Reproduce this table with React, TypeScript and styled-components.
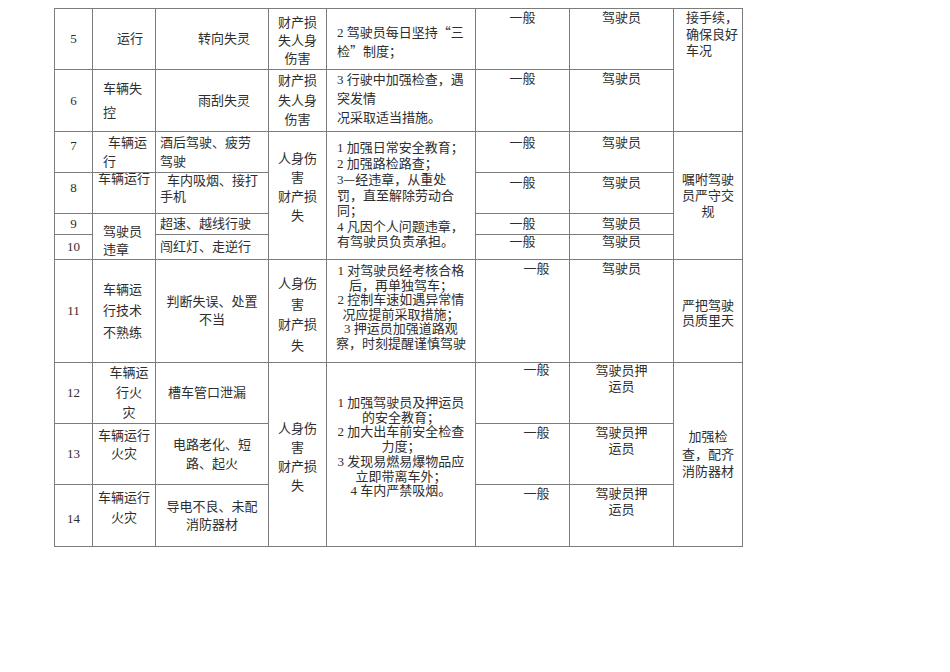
import React from 'react';
import styled, { createGlobalStyle } from 'styled-components';

const GlobalStyle = createGlobalStyle`
  html, body { margin: 0; padding: 0; background: #ffffff; }
  body { font-family: "Liberation Serif", "Noto Sans CJK SC", serif; }
`;

const Page = styled.div`
  padding: 8px 0 0 54px;
`;

const Sheet = styled.table`
  border-collapse: collapse;
  table-layout: fixed;
  width: 688px;
`;

const Col = styled.col<{ $w: number }>`
  width: ${(p) => p.$w}px;
`;

const Row = styled.tr<{ $h: number }>`
  height: ${(p) => p.$h}px;
`;

type CellProps = {
  $align?: 'left' | 'center';
  $v?: 'top' | 'middle' | 'bottom';
  $pt?: number;
  $pl?: number;
  $lh?: number;
  $indent?: number;
};

const Cell = styled.td<CellProps>`
  border: 1px solid #7c7c7c;
  padding: ${(p) => p.$pt ?? 0}px 2px 0 ${(p) => p.$pl ?? 2}px;
  text-align: ${(p) => p.$align ?? 'center'};
  vertical-align: ${(p) => p.$v ?? 'middle'};
  line-height: ${(p) => p.$lh ?? 16}px;
  text-indent: ${(p) => p.$indent ?? 0}px;
  font-size: 13px;
  color: #2e2e2e;
  white-space: nowrap;
  overflow: hidden;
`;

const Num = styled(Cell)`
  font-size: 13px;
`;

const Q = styled.span`
  font-family: "Noto Sans CJK SC", sans-serif;
`;

const widths = [38, 63, 113, 58, 149, 94, 104, 69];

export default function App() {
  return (
    <>
      <GlobalStyle />
      <Page>
        <Sheet>
          <colgroup>
            {widths.map((w, i) => (
              <Col key={i} $w={w} />
            ))}
          </colgroup>
          <tbody>
            <Row $h={61}>
              <Num>5</Num>
              <Cell $align="left" $pl={24}>运行</Cell>
              <Cell $align="left" $pl={42}>转向失灵</Cell>
              <Cell $v="top" $pt={5} $lh={18}>
                财产损<br />失人身<br />伤害
              </Cell>
              <Cell $align="left" $v="top" $pt={14} $lh={18} $pl={10}>
                2 驾驶员每日坚持<Q>“</Q>三<br />检<Q>”</Q>制度；
              </Cell>
              <Cell $v="top" $pt={1}>一般</Cell>
              <Cell $v="top" $pt={1}>驾驶员</Cell>
              <Cell rowSpan={2} $align="left" $v="top" $pt={1} $lh={16.5} $pl={12}>
                接手续，<br />确保良好<br />车况
              </Cell>
            </Row>
            <Row $h={62}>
              <Num>6</Num>
              <Cell $align="left" $v="top" $pt={7} $lh={24} $pl={10}>
                车辆失<br />控
              </Cell>
              <Cell $align="left" $pl={42}>雨刮失灵</Cell>
              <Cell $v="top" $pt={1} $lh={19.5}>
                财产损<br />失人身<br />伤害
              </Cell>
              <Cell $align="left" $v="top" $pt={0} $lh={19} $pl={10}>
                3 行驶中加强检查，遇<br />突发情<br />况采取适当措施。
              </Cell>
              <Cell $v="top" $pt={1}>一般</Cell>
              <Cell $v="top" $pt={1}>驾驶员</Cell>
            </Row>
            <Row $h={41}>
              <Num $v="top" $pt={6}>7</Num>
              <Cell $align="left" $v="top" $pt={1} $lh={19} $pl={10} $indent={5}>
                车辆运<br />行
              </Cell>
              <Cell $align="left" $v="top" $pt={1} $lh={19} $pl={4}>
                酒后驾驶、疲劳<br />驾驶
              </Cell>
              <Cell rowSpan={4} $v="top" $pt={17} $lh={19}>
                人身伤<br />害<br />财产损<br />失
              </Cell>
              <Cell rowSpan={4} $align="left" $v="top" $pt={8} $lh={15.5} $pl={10}>
                1 加强日常安全教育；<br />2 加强路检路查；<br />3<Q>—</Q>经违章，从重处<br />罚，直至解除劳动合<br />同；<br />4 凡因个人问题违章，<br />有驾驶员负责承担。
              </Cell>
              <Cell $v="top" $pt={3}>一般</Cell>
              <Cell $v="top" $pt={3}>驾驶员</Cell>
              <Cell rowSpan={4} $lh={16}>
                嘱咐驾驶<br />员严守交<br />规
              </Cell>
            </Row>
            <Row $h={41}>
              <Num $v="top" $pt={7}>8</Num>
              <Cell $align="left" $v="top" $pt={0} $lh={12} $pl={5}>车辆运行</Cell>
              <Cell $align="left" $v="top" $pt={0} $lh={16} $pl={4} $indent={7}>
                车内吸烟、接打<br />手机
              </Cell>
              <Cell $v="top" $pt={2}>一般</Cell>
              <Cell $v="top" $pt={2}>驾驶员</Cell>
            </Row>
            <Row $h={21}>
              <Num>9</Num>
              <Cell rowSpan={2} $align="left" $v="top" $pt={9} $lh={18} $pl={10}>
                驾驶员<br />违章
              </Cell>
              <Cell $align="left" $pl={4}>超速、越线行驶</Cell>
              <Cell>一般</Cell>
              <Cell>驾驶员</Cell>
            </Row>
            <Row $h={25}>
              <Num>10</Num>
              <Cell $align="left" $pl={4}>闯红灯、走逆行</Cell>
              <Cell $v="top" $lh={13}>一般</Cell>
              <Cell $v="top" $lh={13}>驾驶员</Cell>
            </Row>
            <Row $h={103}>
              <Num>11</Num>
              <Cell $align="left" $lh={21.5} $pl={10}>
                车辆运<br />行技术<br />不熟练
              </Cell>
              <Cell $lh={18}>
                判断失误、处置<br />不当
              </Cell>
              <Cell $v="top" $pt={14} $lh={20.5}>
                人身伤<br />害<br />财产损<br />失
              </Cell>
              <Cell $v="top" $pt={4} $lh={14.6}>
                1 对驾驶员经考核合格<br />后，再单独驾车；<br />2 控制车速如遇异常情<br />况应提前采取措施；<br />3 押运员加强道路观<br />察，时刻提醒谨慎驾驶
              </Cell>
              <Cell $v="top" $pt={1} $pl={30}>一般</Cell>
              <Cell $v="top" $pt={1}>驾驶员</Cell>
              <Cell $align="left" $pt={4} $lh={15.5} $pl={8}>
                严把驾驶<br />员质里天
              </Cell>
            </Row>
            <Row $h={61}>
              <Num>12</Num>
              <Cell $v="top" $pt={0} $lh={20} $pl={12}>
                车辆运<br />行火<br />灾
              </Cell>
              <Cell $align="left" $pl={12}>槽车管口泄漏</Cell>
              <Cell rowSpan={3} $pt={5} $lh={19}>
                人身伤<br />害<br />财产损<br />失
              </Cell>
              <Cell rowSpan={3} $v="top" $pt={33} $lh={14.7}>
                1 加强驾驶员及押运员<br />的安全教育；<br />2 加大出车前安全检查<br />力度；<br />3 发现易燃易爆物品应<br />立即带离车外；<br />4 车内严禁吸烟。
              </Cell>
              <Cell $v="top" $lh={13} $pl={30}>一般</Cell>
              <Cell $v="top" $lh={16}>
                驾驶员押<br />运员
              </Cell>
              <Cell rowSpan={3} $lh={17.5}>
                加强检<br />查，配齐<br />消防器材
              </Cell>
            </Row>
            <Row $h={61}>
              <Num>13</Num>
              <Cell $v="top" $pt={3} $lh={18}>
                车辆运行<br />火灾
              </Cell>
              <Cell $lh={19}>
                电路老化、短<br />路、起火
              </Cell>
              <Cell $v="top" $pt={1} $pl={30}>一般</Cell>
              <Cell $v="top" $pt={1}>
                驾驶员押<br />运员
              </Cell>
            </Row>
            <Row $h={62}>
              <Num $pt={6}>14</Num>
              <Cell $v="top" $pt={3} $lh={20}>
                车辆运行<br />火灾
              </Cell>
              <Cell $lh={18}>
                导电不良、未配<br />消防器材
              </Cell>
              <Cell $v="top" $pt={1} $pl={30}>一般</Cell>
              <Cell $v="top" $pt={1}>
                驾驶员押<br />运员
              </Cell>
            </Row>
          </tbody>
        </Sheet>
      </Page>
    </>
  );
}
